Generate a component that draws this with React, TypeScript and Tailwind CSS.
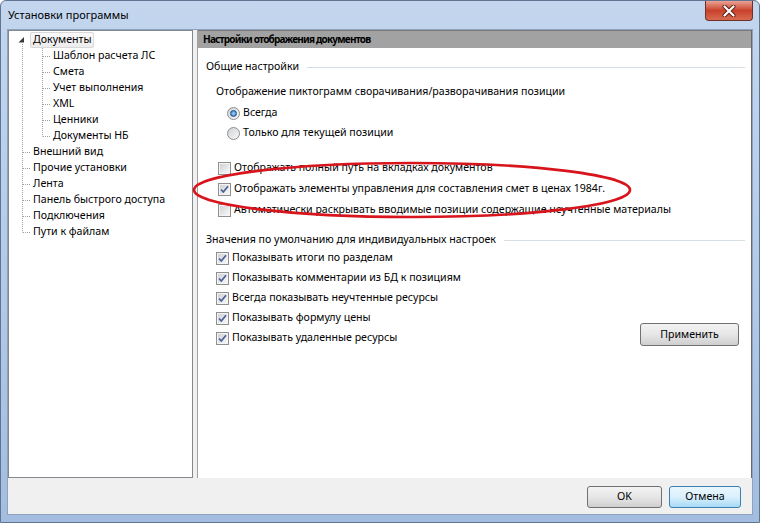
import React from "react";

const font = { fontFamily: '"Noto Sans", "DejaVu Sans", sans-serif' };

type Node = { label: string; level: 0 | 1; last?: boolean; root?: boolean; selected?: boolean };

const tree: Node[] = [
  { label: "Документы", level: 0, root: true, selected: true },
  { label: "Шаблон расчета ЛС", level: 1 },
  { label: "Смета", level: 1 },
  { label: "Учет выполнения", level: 1 },
  { label: "XML", level: 1 },
  { label: "Ценники", level: 1 },
  { label: "Документы НБ", level: 1, last: true },
  { label: "Внешний вид", level: 0 },
  { label: "Прочие установки", level: 0 },
  { label: "Лента", level: 0 },
  { label: "Панель быстрого доступа", level: 0 },
  { label: "Подключения", level: 0 },
  { label: "Пути к файлам", level: 0, last: true },
];

function Connector({ node }: { node: Node }) {
  const dot = { stroke: "#a0a0a0", strokeDasharray: "1 1", strokeWidth: 1 };
  if (node.root) {
    return (
      <svg width={21} height={16} className="shrink-0">
        <polygon points="15,5 15,10.5 9.5,10.5" fill="#3a3a3a" />
        <line x1={13.5} y1={12} x2={13.5} y2={16} {...dot} />
      </svg>
    );
  }
  if (node.level === 0) {
    return (
      <svg width={21} height={16} className="shrink-0">
        <line x1={13.5} y1={0} x2={13.5} y2={node.last ? 8.5 : 16} {...dot} />
        <line x1={14} y1={8.5} x2={21} y2={8.5} {...dot} />
      </svg>
    );
  }
  return (
    <svg width={41} height={16} className="shrink-0">
      <line x1={13.5} y1={0} x2={13.5} y2={16} {...dot} />
      <line x1={33.5} y1={0} x2={33.5} y2={node.last ? 8.5 : 16} {...dot} />
      <line x1={34} y1={8.5} x2={41} y2={8.5} {...dot} />
    </svg>
  );
}

function Check({ checked }: { checked?: boolean }) {
  return (
    <span className="flex h-[13px] w-[13px] shrink-0 items-center justify-center border border-[#8f8f8f] bg-[#f4f4f4] p-[1px]">
      <span className="relative flex h-full w-full items-center justify-center bg-linear-to-br from-[#cfd2d6] to-[#f7f7f7]">
        {checked && (
          <svg width={11} height={11} viewBox="0 0 11 11" className="absolute">
            <path d="M2 5.5 L4.3 8 L9 2.2" fill="none" stroke="#4b5f95" strokeWidth={1.7} />
          </svg>
        )}
      </span>
    </span>
  );
}

function Radio({ checked }: { checked?: boolean }) {
  return (
    <span className="flex h-[13px] w-[13px] shrink-0 items-center justify-center rounded-full border border-[#8c8c8c] bg-linear-to-br from-[#d0d3d7] to-[#f9f9f9]">
      {checked && (
        <span className="h-[7px] w-[7px] rounded-full border border-[#1d4f8f] bg-radial from-[#9fd3f5] to-[#2f6db8]" />
      )}
    </span>
  );
}

function GroupTitle({ text, className }: { text: string; className?: string }) {
  return (
    <div className={"flex h-4 items-center pr-[6px] pl-[8px] " + (className ?? "")}>
      <span className="whitespace-nowrap">{text}</span>
      <span className="ml-2 h-px flex-1 bg-[#d5dfe5]" />
    </div>
  );
}

function CheckRow({ text, checked, className }: { text: string; checked?: boolean; className?: string }) {
  return (
    <div className={"flex h-5 items-center gap-[3px] whitespace-nowrap " + (className ?? "")}>
      <Check checked={checked} />
      <span>{text}</span>
    </div>
  );
}

function WinButton({ children, focused, className }: { children: React.ReactNode; focused?: boolean; className?: string }) {
  return (
    <button
      className={
        "flex h-[22px] items-center justify-center rounded-[3px] border " +
        (focused
          ? "border-[#3c7fb1] bg-linear-to-b from-[#eaf6fd] via-[#d9f0fc] to-[#a7d9f5] "
          : "border-[#707070] bg-linear-to-b from-[#f3f3f3] via-[#e6e6e6] to-[#cfcfcf] ") +
        (className ?? "")
      }
    >
      {children}
    </button>
  );
}

export default function App() {
  return (
    <div
      style={font}
      className="relative flex h-[523px] w-[760px] flex-col overflow-hidden rounded-t-[6px] border border-[#5f7592] bg-linear-to-b from-[#c3d6ee] via-[#b4cbe8] to-[#a3bde0] px-[6px] pb-[7px] text-[10.6px] text-black"
    >
      {/* title bar */}
      <div className="flex h-[28px] items-start">
        <span className="mt-[6px] pl-[1px] text-[11px]">Установки программы</span>
        <div className="ml-auto flex h-[20px] w-[48px] items-center justify-center rounded-b-[4px] border border-t-0 border-[#6e3027] bg-linear-to-b from-[#eba294] via-[#c8402a] to-[#d86a50]">
          <svg width={14} height={12} viewBox="0 0 14 12">
            <path d="M2.5 1.5 L11.5 10.5 M11.5 1.5 L2.5 10.5" stroke="#5a1c14" strokeWidth={4} strokeLinecap="round" />
            <path d="M2.5 1.5 L11.5 10.5 M11.5 1.5 L2.5 10.5" stroke="#ffffff" strokeWidth={2.2} strokeLinecap="round" />
          </svg>
        </div>
      </div>

      {/* client */}
      <div className="flex flex-1 flex-col border border-[#8ea2be] bg-[#f0f0f0]">
        <div className="flex h-[448px] gap-[4px]">
          {/* tree */}
          <div className="w-[185px] shrink-0 border border-[#828790] bg-white pt-[1px]">
            {tree.map((n) => (
              <div key={n.label} className="flex h-4 items-center whitespace-nowrap">
                <Connector node={n} />
                <span
                  className={
                    "flex h-4 items-center px-[2px] " +
                    (n.selected ? "rounded-[2px] border border-[#d9d9d9] bg-linear-to-b from-[#fafafa] to-[#ececec]" : "border border-transparent")
                  }
                >
                  {n.label}
                </span>
              </div>
            ))}
          </div>

          {/* settings page */}
          <div className="flex flex-1 flex-col border-r border-l border-r-[#696969] border-l-[#a0a0a0] bg-white">
            <div className="flex h-[18px] items-center border-t border-[#7a7a7a] bg-[#a2a2a2] pl-[5px] text-[10px] font-bold tracking-[-0.8px]">
              Настройки отображения документов
            </div>

            <GroupTitle text="Общие настройки" className="mt-[11px]" />
            <div className="mt-[7px] flex h-5 items-center pl-[18px]">
              Отображение пиктограмм сворачивания/разворачивания позиции
            </div>
            <div className="mt-[1px] flex h-5 items-center gap-[3px] pl-[29px]">
              <Radio checked />
              <span>Всегда</span>
            </div>
            <div className="flex h-5 items-center gap-[3px] pl-[29px]">
              <Radio />
              <span>Только для текущей позиции</span>
            </div>

            <CheckRow text="Отображать полный путь на вкладках документов" className="mt-[15px] pl-[20px]" />
            <CheckRow text="Отображать элементы управления для составления смет в ценах 1984г." checked className="mt-[1px] pl-[20px]" />
            <CheckRow text="Автоматически раскрывать вводимые позиции содержащие неучтенные материалы" className="mt-[1px] pl-[20px]" />

            <GroupTitle text="Значения по умолчанию для индивидуальных настроек" className="mt-[12px]" />
            <div className="flex items-start">
              <div className="flex flex-col pl-[18px]">
                <CheckRow text="Показывать итоги по разделам" checked />
                <CheckRow text="Показывать комментарии из БД к позициям" checked />
                <CheckRow text="Всегда показывать неучтенные ресурсы" checked />
                <CheckRow text="Показывать формулу цены" checked />
                <CheckRow text="Показывать удаленные ресурсы" checked />
              </div>
              <WinButton className="mt-[75px] mr-[12px] ml-auto h-[23px] w-[99px]">Применить</WinButton>
            </div>
          </div>
        </div>

        {/* footer buttons */}
        <div className="flex flex-1 items-start justify-end gap-[7px] pt-[8px] pr-[11px]">
          <WinButton className="w-[75px]">OK</WinButton>
          <WinButton focused className="w-[72px]">
            Отмена
          </WinButton>
        </div>
      </div>

      {/* hand-drawn red ellipse over the settings */}
      <svg width={760} height={523} className="pointer-events-none absolute top-0 left-0">
        <ellipse cx={411} cy={189} rx={218} ry={27} fill="none" stroke="#d8141c" strokeWidth={2.6} />
      </svg>
    </div>
  );
}
